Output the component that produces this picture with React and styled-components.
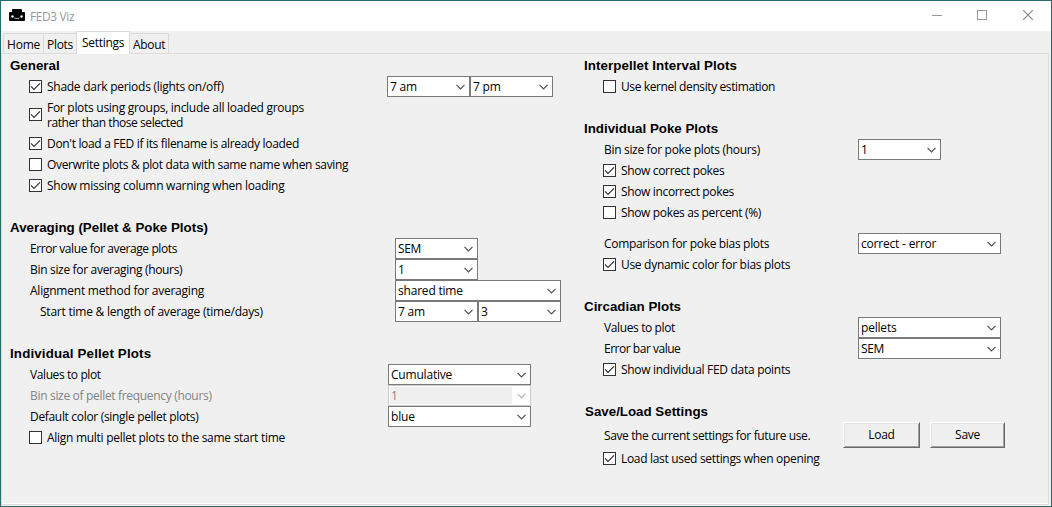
import React, { useState } from "react";
import styled, { createGlobalStyle } from "styled-components";

const GlobalStyle = createGlobalStyle`
  * { box-sizing: border-box; }
  html, body { margin: 0; padding: 0; overflow: hidden; }
`;

const Window = styled.div`
  width: 1052px;
  height: 507px;
  display: flex;
  flex-direction: column;
  border: 1px solid #2a6b6c;
  background: #f0f0f0;
  color: #000;
  font-family: "Open Sans", "Noto Sans", sans-serif;
  font-size: 12px;
  line-height: 15px;
  overflow: hidden;
`;

const TitleBar = styled.header`
  height: 30px;
  flex: none;
  display: flex;
  align-items: flex-start;
  background: #fff;
  padding-left: 8px;
`;

const AppIcon = styled.svg`
  flex: none;
  margin-top: 8px;
`;

const Title = styled.span`
  flex: 1;
  margin: 8px 0 0 5px;
  color: #999;
  letter-spacing: -0.4px;
`;

const WindowButton = styled.div`
  width: ${(p) => p.$width || 46}px;
  height: 28px;
  display: flex;
  align-items: center;
  justify-content: center;
`;

const TabStrip = styled.nav`
  height: 22px;
  flex: none;
  display: flex;
  align-items: flex-end;
  padding-left: 2px;
`;

const Tab = styled.div`
  width: ${(p) => p.$width}px;
  height: ${(p) => (p.$active ? 23 : 20)}px;
  margin: 0 ${(p) => (p.$active ? "-1px -1px -1px" : "0 0 0")};
  padding: ${(p) => (p.$active ? "3px 0 0 5px" : "3px 0 0 3px")};
  position: relative;
  z-index: ${(p) => (p.$active ? 1 : 0)};
  background: ${(p) => (p.$active ? "#fff" : "#f0f0f0")};
  border: 1px solid #d9d9d9;
  border-bottom: 0;
  border-right-width: ${(p) => (p.$joined ? 0 : 1)}px;
  white-space: nowrap;
  letter-spacing: ${(p) => p.$tracking}px;
`;

const Page = styled.main`
  flex: 1;
  margin: 0 2px 1px 0;
  border: 1px solid #dcdcdc;
  box-shadow: inset 0 -1px #fff;
  display: grid;
  grid-template-columns: 574px 1fr;
  padding: 1px 0 0 8px;
`;

const Column = styled.div`
  display: flex;
  flex-direction: column;
  gap: 21px;
`;

const Section = styled.section`
  display: flex;
  flex-direction: column;
`;

const Heading = styled.h2`
  margin: 0;
  height: 21px;
  padding-left: ${(p) => p.$inset || 0}px;
  font: bold 13.33px/21px "Liberation Sans", Arial, sans-serif;
  letter-spacing: ${(p) => p.$tracking || 0}px;
  white-space: nowrap;
`;

const Row = styled.div`
  display: flex;
  align-items: center;
  height: ${(p) => p.$height || 21}px;
  margin-top: ${(p) => p.$gap || 0}px;
  padding-left: ${(p) => p.$indent ?? 20}px;
`;

const Label = styled.span`
  flex: none;
  width: ${(p) => p.$width}px;
  color: ${(p) => (p.$disabled ? "#838383" : "#000")};
  letter-spacing: ${(p) => p.$tracking ?? -0.32}px;
  white-space: pre;
`;

const Line = styled.span`
  display: block;
  letter-spacing: ${(p) => p.$tracking}px;
`;

const CheckLabel = styled.label`
  display: flex;
  align-items: flex-start;
  gap: 5px;
`;

const Box = styled.span`
  flex: none;
  width: 13px;
  height: 13px;
  margin-top: ${(p) => (p.$tall ? 8 : 1)}px;
  border: 1px solid #333;
  background: #fff;
  display: flex;
`;

const Combo = styled.div`
  flex: none;
  width: ${(p) => p.$width}px;
  height: 21px;
  display: flex;
  align-items: center;
  justify-content: space-between;
  border: 1px solid ${(p) => (p.$disabled ? "#ccc" : "#7a7a7a")};
  background: #fff;
  color: ${(p) => (p.$disabled ? "#838383" : "#000")};
  padding: 1px 4px 1px 1px;
`;

const ComboText = styled.span`
  flex: 1;
  height: 17px;
  line-height: 17px;
  margin-right: 5px;
  padding-left: 1px;
  background: ${(p) => (p.$disabled ? "#f0f0f0" : "#fff")};
  letter-spacing: ${(p) => p.$tracking}px;
  white-space: nowrap;
`;

const PushButton = styled.button`
  width: ${(p) => p.$width}px;
  height: 26px;
  margin-right: 10px;
  padding: 0 0 1px;
  border: 1px solid;
  border-color: #fff #696969 #696969 #fff;
  box-shadow: inset 1px 1px #e3e3e3, inset -1px -1px #a0a0a0;
  background: #f0f0f0;
  color: #000;
  font: inherit;
  letter-spacing: -0.3px;
`;

function Check({ text, on, tracking, tall, children }) {
  const [checked, setChecked] = useState(Boolean(on));
  return (
    <CheckLabel onClick={() => setChecked(!checked)}>
      <Box $tall={tall}>
        {checked && (
          <svg width="11" height="11" viewBox="0 0 11 11" fill="none" stroke="#333" strokeWidth="1.2">
            <path d="M1 5.3 L4 8.3 L10 2.3" />
          </svg>
        )}
      </Box>
      <Label $tracking={tracking}>{text || children}</Label>
    </CheckLabel>
  );
}

function Select({ value, width = 83, disabled, tracking = -0.2 }) {
  return (
    <Combo $width={width} $disabled={disabled}>
      <ComboText $disabled={disabled} $tracking={tracking}>{value}</ComboText>
      <svg width="9" height="6" viewBox="0 0 9 6" fill="none" stroke={disabled ? "#b4b4b4" : "#505050"} strokeWidth="1.2">
        <path d="M0.5 0.8 L4.5 4.8 L8.5 0.8" />
      </svg>
    </Combo>
  );
}

export default function App() {
  return (
    <>
      <GlobalStyle />
      <Window>
        <TitleBar>
          <AppIcon width="16" height="12" viewBox="0 0 16 12">
            <path d="M3 1 Q3 0 4 0 H12 Q13 0 13 1 V3 H15 Q16 3 16 4 V11 Q16 12 15 12 H1 Q0 12 0 11 V4 Q0 3 1 3 H3 Z" fill="#000" />
            <circle cx="3.5" cy="7.5" r="1.2" fill="#fff" />
            <circle cx="12.5" cy="7.5" r="1.2" fill="#fff" />
            <path d="M6 8.5 V9.5 H10 V8.5" stroke="#ccc" strokeWidth="0.8" fill="none" />
          </AppIcon>
          <Title>FED3 Viz</Title>
          <WindowButton $width={44}>
            <svg width="10" height="10"><path d="M0 5.5 H10" stroke="#999" /></svg>
          </WindowButton>
          <WindowButton>
            <svg width="10" height="10"><rect x="0.5" y="0.5" width="9" height="9" fill="none" stroke="#999" /></svg>
          </WindowButton>
          <WindowButton>
            <svg width="10" height="10"><path d="M0 0 L10 10 M10 0 L0 10" stroke="#888" strokeWidth="1.2" /></svg>
          </WindowButton>
        </TitleBar>
        <TabStrip>
          <Tab $width={40} $joined $tracking={-0.2}>Home</Tab>
          <Tab $width={34} $joined $tracking={-0.3}>Plots</Tab>
          <Tab $width={54} $active $tracking={-0.3}>Settings</Tab>
          <Tab $width={40} $tracking={-0.3}>About</Tab>
        </TabStrip>
        <Page>
          <Column>
            <Section>
              <Heading>General</Heading>
              <Row $indent={19}>
                <Label as="div" $width={358}><Check on tracking={-0.27} text="Shade dark periods (lights on/off)" /></Label>
                <Select value="7 am" />
                <Select value="7 pm" />
              </Row>
              <Row $indent={19} $height={36}>
                <Check on tall>
                  <Line $tracking={-0.28}>For plots using groups, include all loaded groups</Line>
                  <Line $tracking={-0.45}>rather than those selected</Line>
                </Check>
              </Row>
              <Row $indent={19}><Check on text="Don't load a FED if its filename is already loaded" /></Row>
              <Row $indent={19}><Check text="Overwrite plots & plot data with same name when saving" /></Row>
              <Row $indent={19}><Check on tracking={-0.25} text="Show missing column warning when loading" /></Row>
            </Section>
            <Section>
              <Heading>Averaging (Pellet &amp; Poke Plots)</Heading>
              <Row><Label $width={365} $tracking={-0.41}>Error value for average plots</Label><Select value="SEM" tracking={-0.4} /></Row>
              <Row><Label $width={365}>Bin size for averaging (hours)</Label><Select value="1" /></Row>
              <Row><Label $width={365} $tracking={-0.23}>Alignment method for averaging</Label><Select value="shared time" width={166} /></Row>
              <Row $indent={30}>
                <Label $width={355} $tracking={-0.23}>Start time &amp; length of average (time/days)</Label>
                <Select value="7 am" />
                <Select value="3" />
              </Row>
            </Section>
            <Section>
              <Heading $tracking={0.15}>Individual Pellet Plots</Heading>
              <Row><Label $width={358} $tracking={-0.4}>Values to plot</Label><Select value="Cumulative" width={143} /></Row>
              <Row><Label $width={358} $disabled>Bin size of pellet frequency (hours)</Label><Select value="1" width={143} disabled /></Row>
              <Row><Label $width={358}>Default color (single pellet plots)</Label><Select value="blue" width={143} /></Row>
              <Row $indent={19}><Check tracking={-0.28} text="Align multi pellet plots to the same start time" /></Row>
            </Section>
          </Column>
          <Column>
            <Section>
              <Heading $tracking={0.07}>Interpellet Interval Plots</Heading>
              <Row $indent={19}><Check tracking={-0.4} text="Use kernel density estimation" /></Row>
            </Section>
            <Section>
              <Heading>Individual Poke Plots</Heading>
              <Row><Label $width={254}>Bin size for poke plots (hours)</Label><Select value="1" /></Row>
              <Row $indent={19}><Check on tracking={-0.35} text="Show correct pokes" /></Row>
              <Row $indent={19}><Check on tracking={-0.35} text="Show incorrect pokes" /></Row>
              <Row $indent={19}><Check tracking={-0.35} text="Show pokes as percent (%)" /></Row>
              <Row $gap={10}><Label $width={254}>Comparison for poke bias plots</Label><Select value="correct - error" width={143} /></Row>
              <Row $indent={19}><Check on tracking={-0.3} text="Use dynamic color for bias plots" /></Row>
            </Section>
            <Section>
              <Heading>Circadian Plots</Heading>
              <Row><Label $width={254} $tracking={-0.38}>Values to plot</Label><Select value="pellets" width={143} /></Row>
              <Row><Label $width={254} $tracking={-0.48}>Error bar value</Label><Select value="SEM" width={143} tracking={-0.4} /></Row>
              <Row $indent={19}><Check on tracking={-0.3} text="Show individual FED data points" /></Row>
            </Section>
            <Section>
              <Heading $inset={1}>Save/Load Settings</Heading>
              <Row $height={26}>
                <Label $width={239} $tracking={-0.38}>Save the current settings for future use.</Label>
                <PushButton $width={77}>Load</PushButton>
                <PushButton $width={75}>Save</PushButton>
              </Row>
              <Row $indent={19}><Check on text="Load last used settings when opening" /></Row>
            </Section>
          </Column>
        </Page>
      </Window>
    </>
  );
}
